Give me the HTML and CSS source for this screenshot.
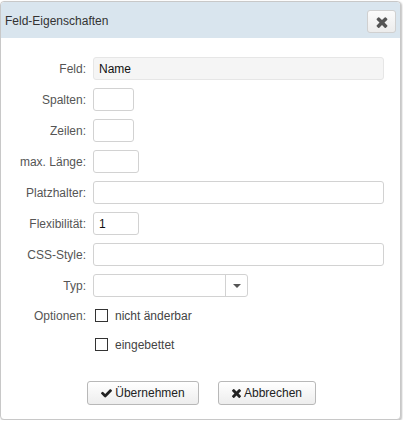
FILE: index.html
```html
<!DOCTYPE html>
<html lang="de">
<head>
<meta charset="utf-8">
<title>Feld-Eigenschaften</title>
<link rel="stylesheet" href="styles.css">
</head>
<body>
<div class="dialog">
  <div class="titlebar">
    <span class="title">Feld-Eigenschaften</span>
    <button class="close" type="button" aria-label="Schließen">
      <svg width="12" height="12" viewBox="110 238 1188 1316"><path fill="#555" d="M1298 1322q0 40-28 68l-136 136q-28 28-68 28t-68-28l-294-294-294 294q-28 28-68 28t-68-28l-136-136q-28-28-28-68t28-68l294-294-294-294q-28-28-28-68t28-68l136-136q28-28 68-28t68 28l294 294 294-294q28-28 68-28t68 28l136 136q28 28 28 68t-28 68l-294 294 294 294q28 28 28 68z"/></svg>
    </button>
  </div>
  <div class="form">
    <label class="lbl">Feld:</label>
    <div class="input disabled">Name</div>

    <label class="lbl">Spalten:</label>
    <div class="input w41"></div>

    <label class="lbl">Zeilen:</label>
    <div class="input w41"></div>

    <label class="lbl">max. Länge:</label>
    <div class="input w46"></div>

    <label class="lbl">Platzhalter:</label>
    <div class="input"></div>

    <label class="lbl">Flexibilität:</label>
    <div class="input w46">1</div>

    <label class="lbl">CSS-Style:</label>
    <div class="input"></div>

    <label class="lbl">Typ:</label>
    <div class="select">
      <span class="select-value"></span>
      <span class="select-arrow"><span class="caret"></span></span>
    </div>

    <label class="lbl opt">Optionen:</label>
    <div class="check"><span class="box"></span><span>nicht änderbar</span></div>

    <span class="lbl opt"></span>
    <div class="check"><span class="box"></span><span>eingebettet</span></div>
  </div>
  <div class="buttons">
    <button class="btn btn-ok" type="button">
      <svg width="11" height="11" viewBox="120 400 1551 1100"><path fill="#222" d="M1671 566q0 40-28 68l-724 724-136 136q-28 28-68 28t-68-28l-136-136-362-362q-28-28-28-68t28-68l136-136q28-28 68-28t68 28l294 295 656-657q28-28 68-28t68 28l136 136q28 28 28 68z"/></svg>
      <span>Übernehmen</span>
    </button>
    <button class="btn" type="button">
      <svg width="9" height="10" viewBox="110 238 1188 1316"><path fill="#222" d="M1298 1322q0 40-28 68l-136 136q-28 28-68 28t-68-28l-294-294-294 294q-28 28-68 28t-68-28l-136-136q-28-28-28-68t28-68l294-294-294-294q-28-28-28-68t28-68l136-136q28-28 68-28t68 28l294 294 294-294q28-28 68-28t68 28l136 136q28 28 28 68t-28 68l-294 294 294 294q28 28 28 68z"/></svg>
      <span>Abbrechen</span>
    </button>
  </div>
</div>
</body>
</html>
```

FILE: styles.css
```css
* { box-sizing: border-box; }

html, body {
  margin: 0;
  padding: 0;
  background: #ffffff;
}

body {
  font-family: "Liberation Sans", Arial, sans-serif;
  font-size: 12px;
  color: #333;
}

.dialog {
  margin: 1px 0 0 0;
  width: 401px;
  height: 419px;
  border: 1px solid #c8c8c8;
  border-radius: 4px;
  box-shadow: 1px 1px 2px rgba(0, 0, 0, 0.25);
  background: #fff;
  overflow: hidden;
}

.titlebar {
  height: 36px;
  background: #d9e5ee;
  display: flex;
  align-items: center;
  justify-content: space-between;
  padding: 0 4px 0 4px;
  border-radius: 3px 3px 0 0;
}

.title {
  font-size: 12px;
  color: #333;
  padding-top: 1px;
}

.close {
  width: 29px;
  height: 23px;
  margin-top: 3px;
  border: 1px solid #d0d0d0;
  border-radius: 3px;
  background: linear-gradient(#fbfbfb, #ececec);
  display: flex;
  align-items: center;
  justify-content: center;
  padding: 0;
}

.form {
  display: grid;
  grid-template-columns: 85px 1fr;
  column-gap: 7px;
  row-gap: 8px;
  padding: 19px 16px 0 0;
  align-items: center;
}

.lbl {
  text-align: right;
  color: #555;
  font-size: 12px;
}

.input {
  height: 23px;
  border: 1px solid #d2d2d2;
  border-radius: 3px;
  background: #fff;
  padding: 0 5px;
  display: flex;
  align-items: center;
  color: #111;
  font-size: 12px;
}

.input.disabled {
  background: #f5f5f5;
  border-color: #e6e6e6;
}

.w41 { width: 41px; }
.w46 { width: 46px; }

.select {
  width: 155px;
  height: 23px;
  border: 1px solid #d2d2d2;
  border-radius: 3px;
  display: flex;
}

.select-value { flex: 1; }

.select-arrow {
  width: 22px;
  border-left: 1px solid #d2d2d2;
  display: flex;
  align-items: center;
  justify-content: center;
}

.caret {
  width: 0;
  height: 0;
  border-left: 4px solid transparent;
  border-right: 4px solid transparent;
  border-top: 4px solid #555;
  margin-top: 1px;
}

.check {
  height: 21px;
  display: flex;
  align-items: center;
  gap: 7px;
  padding-left: 2px;
  color: #444;
}

.box {
  width: 13px;
  height: 13px;
  border: 1px solid #333;
  background: #fff;
}

.buttons {
  display: flex;
  justify-content: center;
  gap: 19px;
  margin-top: 26px;
  padding-left: 2px;
}

.btn {
  height: 24px;
  padding: 0 13px;
  border: 1px solid #b8b8b8;
  border-radius: 3px;
  background: linear-gradient(#ffffff, #ededed);
  font-family: "Liberation Sans", Arial, sans-serif;
  font-size: 12px;
  color: #222;
  display: flex;
  align-items: center;
  gap: 3px;
}

.btn-ok { padding: 0 13px 0 13px; min-width: 112px; justify-content: center; }
```
